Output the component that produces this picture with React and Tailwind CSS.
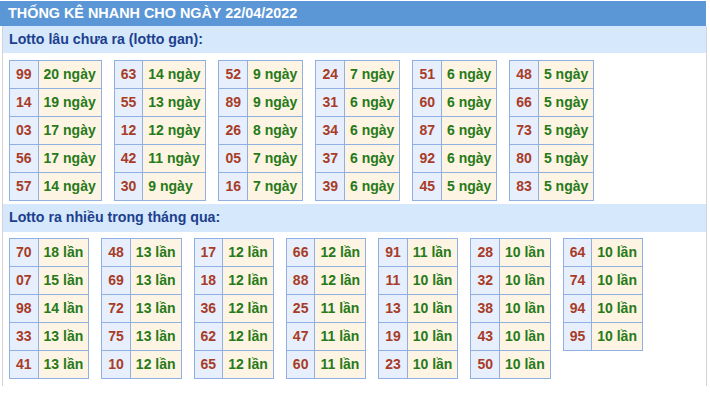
import React from "react";

const gan = [
  [["99", 20], ["14", 19], ["03", 17], ["56", 17], ["57", 14]],
  [["63", 14], ["55", 13], ["12", 12], ["42", 11], ["30", 9]],
  [["52", 9], ["89", 9], ["26", 8], ["05", 7], ["16", 7]],
  [["24", 7], ["31", 6], ["34", 6], ["37", 6], ["39", 6]],
  [["51", 6], ["60", 6], ["87", 6], ["92", 6], ["45", 5]],
  [["48", 5], ["66", 5], ["73", 5], ["80", 5], ["83", 5]],
];

const nhieu = [
  [["70", 18], ["07", 15], ["98", 14], ["33", 13], ["41", 13]],
  [["48", 13], ["69", 13], ["72", 13], ["75", 13], ["10", 12]],
  [["17", 12], ["18", 12], ["36", 12], ["62", 12], ["65", 12]],
  [["66", 12], ["88", 12], ["25", 11], ["47", 11], ["60", 11]],
  [["91", 11], ["11", 10], ["13", 10], ["19", 10], ["23", 10]],
  [["28", 10], ["32", 10], ["38", 10], ["43", 10], ["50", 10]],
  [["64", 10], ["74", 10], ["94", 10], ["95", 10]],
];

function StatTable({ rows, unit }) {
  return (
    <table className="border-collapse self-start">
      <tbody>
        {rows.map(([n, c]) => (
          <tr key={n}>
            <td className="border border-[#8fb0e0] bg-[#e6effb] px-[6px] py-[5px] text-[14px] leading-[17px] font-bold text-[#a83c28] text-center">
              {n}
            </td>
            <td className="border border-[#8fb0e0] bg-[#fef4e4] px-[5px] py-[5px] text-[14px] leading-[17px] font-bold text-[#267a18] text-left whitespace-nowrap">
              {c} {unit}
            </td>
          </tr>
        ))}
      </tbody>
    </table>
  );
}

export default function App() {
  return (
    <div
      className="w-[710px] h-[393px] bg-white pt-[1px]"
      style={{ fontFamily: '"Liberation Sans", Arial, sans-serif' }}
    >
      <div className="w-[706px] h-[25px] bg-[#5b97d6] flex items-center pl-[8px] text-white font-bold text-[14.4px]">
        THỐNG KÊ NHANH CHO NGÀY 22/04/2022
      </div>
      <div className="ml-[2px] w-[705px] border-l border-r border-[#d3d3d3] pb-[7px]">
        <div className="h-[27px] bg-[#d6e8fb] flex items-center pl-[6px] text-[#1c3f8e] font-bold text-[14.2px]">
          Lotto lâu chưa ra (lotto gan):
        </div>
        <div className="flex gap-x-[12px] pl-[6px] pt-[7px]">
          {gan.map((t, i) => (
            <StatTable key={i} rows={t} unit="ngày" />
          ))}
        </div>
        <div className="mt-[3px] h-[28px] bg-[#d6e8fb] flex items-center pl-[6px] text-[#1c3f8e] font-bold text-[14.2px]">
          Lotto ra nhiều trong tháng qua:
        </div>
        <div className="flex gap-x-[12px] pl-[6px] pt-[6px]">
          {nhieu.map((t, i) => (
            <StatTable key={i} rows={t} unit="lần" />
          ))}
        </div>
      </div>
    </div>
  );
}
